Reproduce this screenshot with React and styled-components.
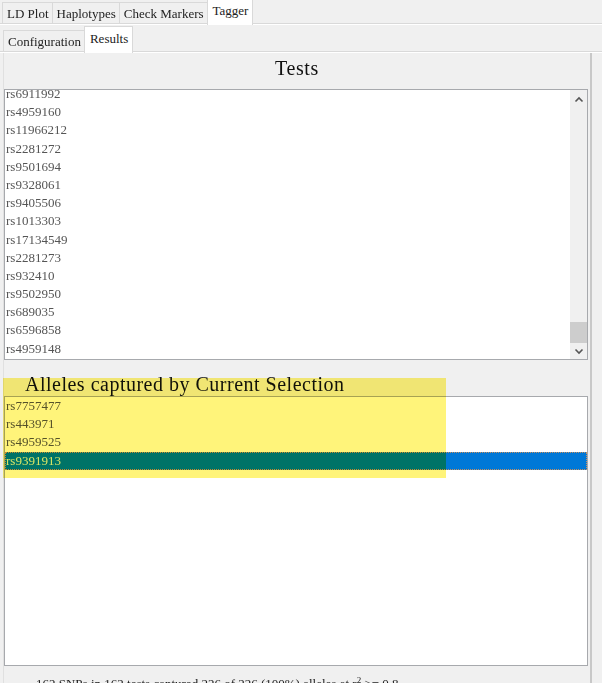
import styled, { createGlobalStyle } from "styled-components"

const tests = [
    "rs6911992", "rs4959160", "rs11966212", "rs2281272", "rs9501694",
    "rs9328061", "rs9405506", "rs1013303", "rs17134549", "rs2281273",
    "rs932410", "rs9502950", "rs689035", "rs6596858", "rs4959148", "rs2076543",
]

const alleles = ["rs7757477", "rs443971", "rs4959525", "rs9391913"]

function Chevron({ down }) {
    return (
        <svg width="10" height="7" viewBox="0 0 10 7">
            <path
                d={down ? "M1.5 1.5 L5 5 L8.5 1.5" : "M1.5 5.5 L5 2 L8.5 5.5"}
                fill="none"
                stroke="#555"
                strokeWidth="1.6"
            />
        </svg>
    )
}

function App() {
    return (
        <StyledApp>
            <GlobalStyle />
            <TabBar>
                <Tab>LD Plot</Tab>
                <Tab>Haplotypes</Tab>
                <Tab>Check Markers</Tab>
                <Tab $active>Tagger</Tab>
            </TabBar>
            <TabBar $sub>
                <Tab>Configuration</Tab>
                <Tab $active>Results</Tab>
            </TabBar>
            <Panel>
                <Heading>Tests</Heading>
                <ListBox $height={271}>
                    <ListScroll $offset={-5}>
                        {tests.map((t) => (
                            <Item key={t}>{t}</Item>
                        ))}
                    </ListScroll>
                    <ScrollBar>
                        <Chevron />
                        <Thumb />
                        <Chevron down />
                    </ScrollBar>
                </ListBox>
                <SubHeading>Alleles captured by Current Selection</SubHeading>
                <ListBox $height={270}>
                    <ListScroll $offset={0}>
                        {alleles.map((a, idx) => (
                            <Item key={a} $selected={idx === 3}>{a}</Item>
                        ))}
                    </ListScroll>
                </ListBox>
                <Status>162 SNPs in 162 tests captured 226 of 226 (100%) alleles at r<sup>2</sup> &gt;= 0.8</Status>
                <Highlight />
            </Panel>
        </StyledApp>
    )
}

const GlobalStyle = createGlobalStyle`
    body {
        margin: 0;
        background: #f0f0f0;
        font-family: "Liberation Serif", "Times New Roman", serif;
    }
`

const StyledApp = styled.div`
    width: 602px;
    height: 683px;
    overflow: hidden;
    background: #f0f0f0;
    color: #222;
`

const TabBar = styled.div`
    display: flex;
    align-items: flex-end;
    height: ${(p) => (p.$sub ? "24px" : "23px")};
    margin-top: ${(p) => (p.$sub ? "3px" : "0")};
    padding-left: ${(p) => (p.$sub ? "4px" : "3px")};
    border-bottom: 1px solid #d9d9d9;
    box-shadow: 0 1px 0 #fff;
`

const Tab = styled.div`
    height: ${(p) => (p.$active ? "25px" : "20px")};
    margin-bottom: ${(p) => (p.$active ? "-2px" : "0")};
    padding: ${(p) => (p.$active ? "1px 4px 0 5px" : "0 3px 0 4px")};
    border: 1px solid #d9d9d9;
    border-bottom: none;
    margin-left: -1px;
    background: ${(p) => (p.$active ? "#fff" : "#f0f0f0")};
    font-size: 13px;
    line-height: 21px;
    white-space: nowrap;
    position: relative;
    z-index: ${(p) => (p.$active ? 1 : 0)};
`

const Panel = styled.div`
    position: relative;
    margin-left: 3px;
    width: 586px;
    height: 640px;
    border-left: 1px solid #e0e0e0;
    border-right: 2px solid #c8c8c8;
    margin-top: 1px;
    display: flex;
    flex-direction: column;
`

const Heading = styled.div`
    height: 36px;
    line-height: 30px;
    text-align: center;
    font-size: 20px;
    letter-spacing: 0.6px;
    color: #111;
`

const SubHeading = styled.div`
    height: 36px;
    padding: 12px 0 0 21px;
    box-sizing: border-box;
    line-height: 24px;
    font-size: 20px;
    letter-spacing: 0.5px;
    color: #111;
    white-space: nowrap;
`

const ListBox = styled.div`
    position: relative;
    width: 584px;
    height: ${(p) => p.$height}px;
    box-sizing: border-box;
    border: 1px solid #a7a9ad;
    background: #fff;
    overflow: hidden;
    display: flex;
`

const ListScroll = styled.div`
    flex: 1;
    margin-top: ${(p) => p.$offset}px;
`

const Item = styled.div`
    height: 18.2px;
    line-height: 18px;
    padding-left: 1px;
    font-size: 13px;
    box-sizing: border-box;
    color: ${(p) => (p.$selected ? "#d8f0d0" : "#555")};
    background: ${(p) => (p.$selected ? "#0078d7" : "transparent")};
    outline: ${(p) => (p.$selected ? "1px dotted #c89060" : "none")};
    outline-offset: -1px;
`

const ScrollBar = styled.div`
    width: 17px;
    background: #f0f0f0;
    display: flex;
    flex-direction: column;
    align-items: center;
    padding: 6px 0 4px;
    box-sizing: border-box;
    svg { flex: none; }
`

const Thumb = styled.div`
    margin-top: auto;
    margin-bottom: 5px;
    width: 17px;
    height: 21px;
    background: #cdcdcd;
`

const Status = styled.div`
    margin-top: 9px;
    padding-left: 32px;
    font-size: 13px;
    line-height: 18px;
    color: #222;
    white-space: nowrap;
    sup { font-size: 9px; line-height: 0; }
`

const Highlight = styled.div`
    position: absolute;
    left: -1px;
    top: 325px;
    width: 443px;
    height: 100px;
    background: #fff47a;
    mix-blend-mode: multiply;
    pointer-events: none;
`

export default App
